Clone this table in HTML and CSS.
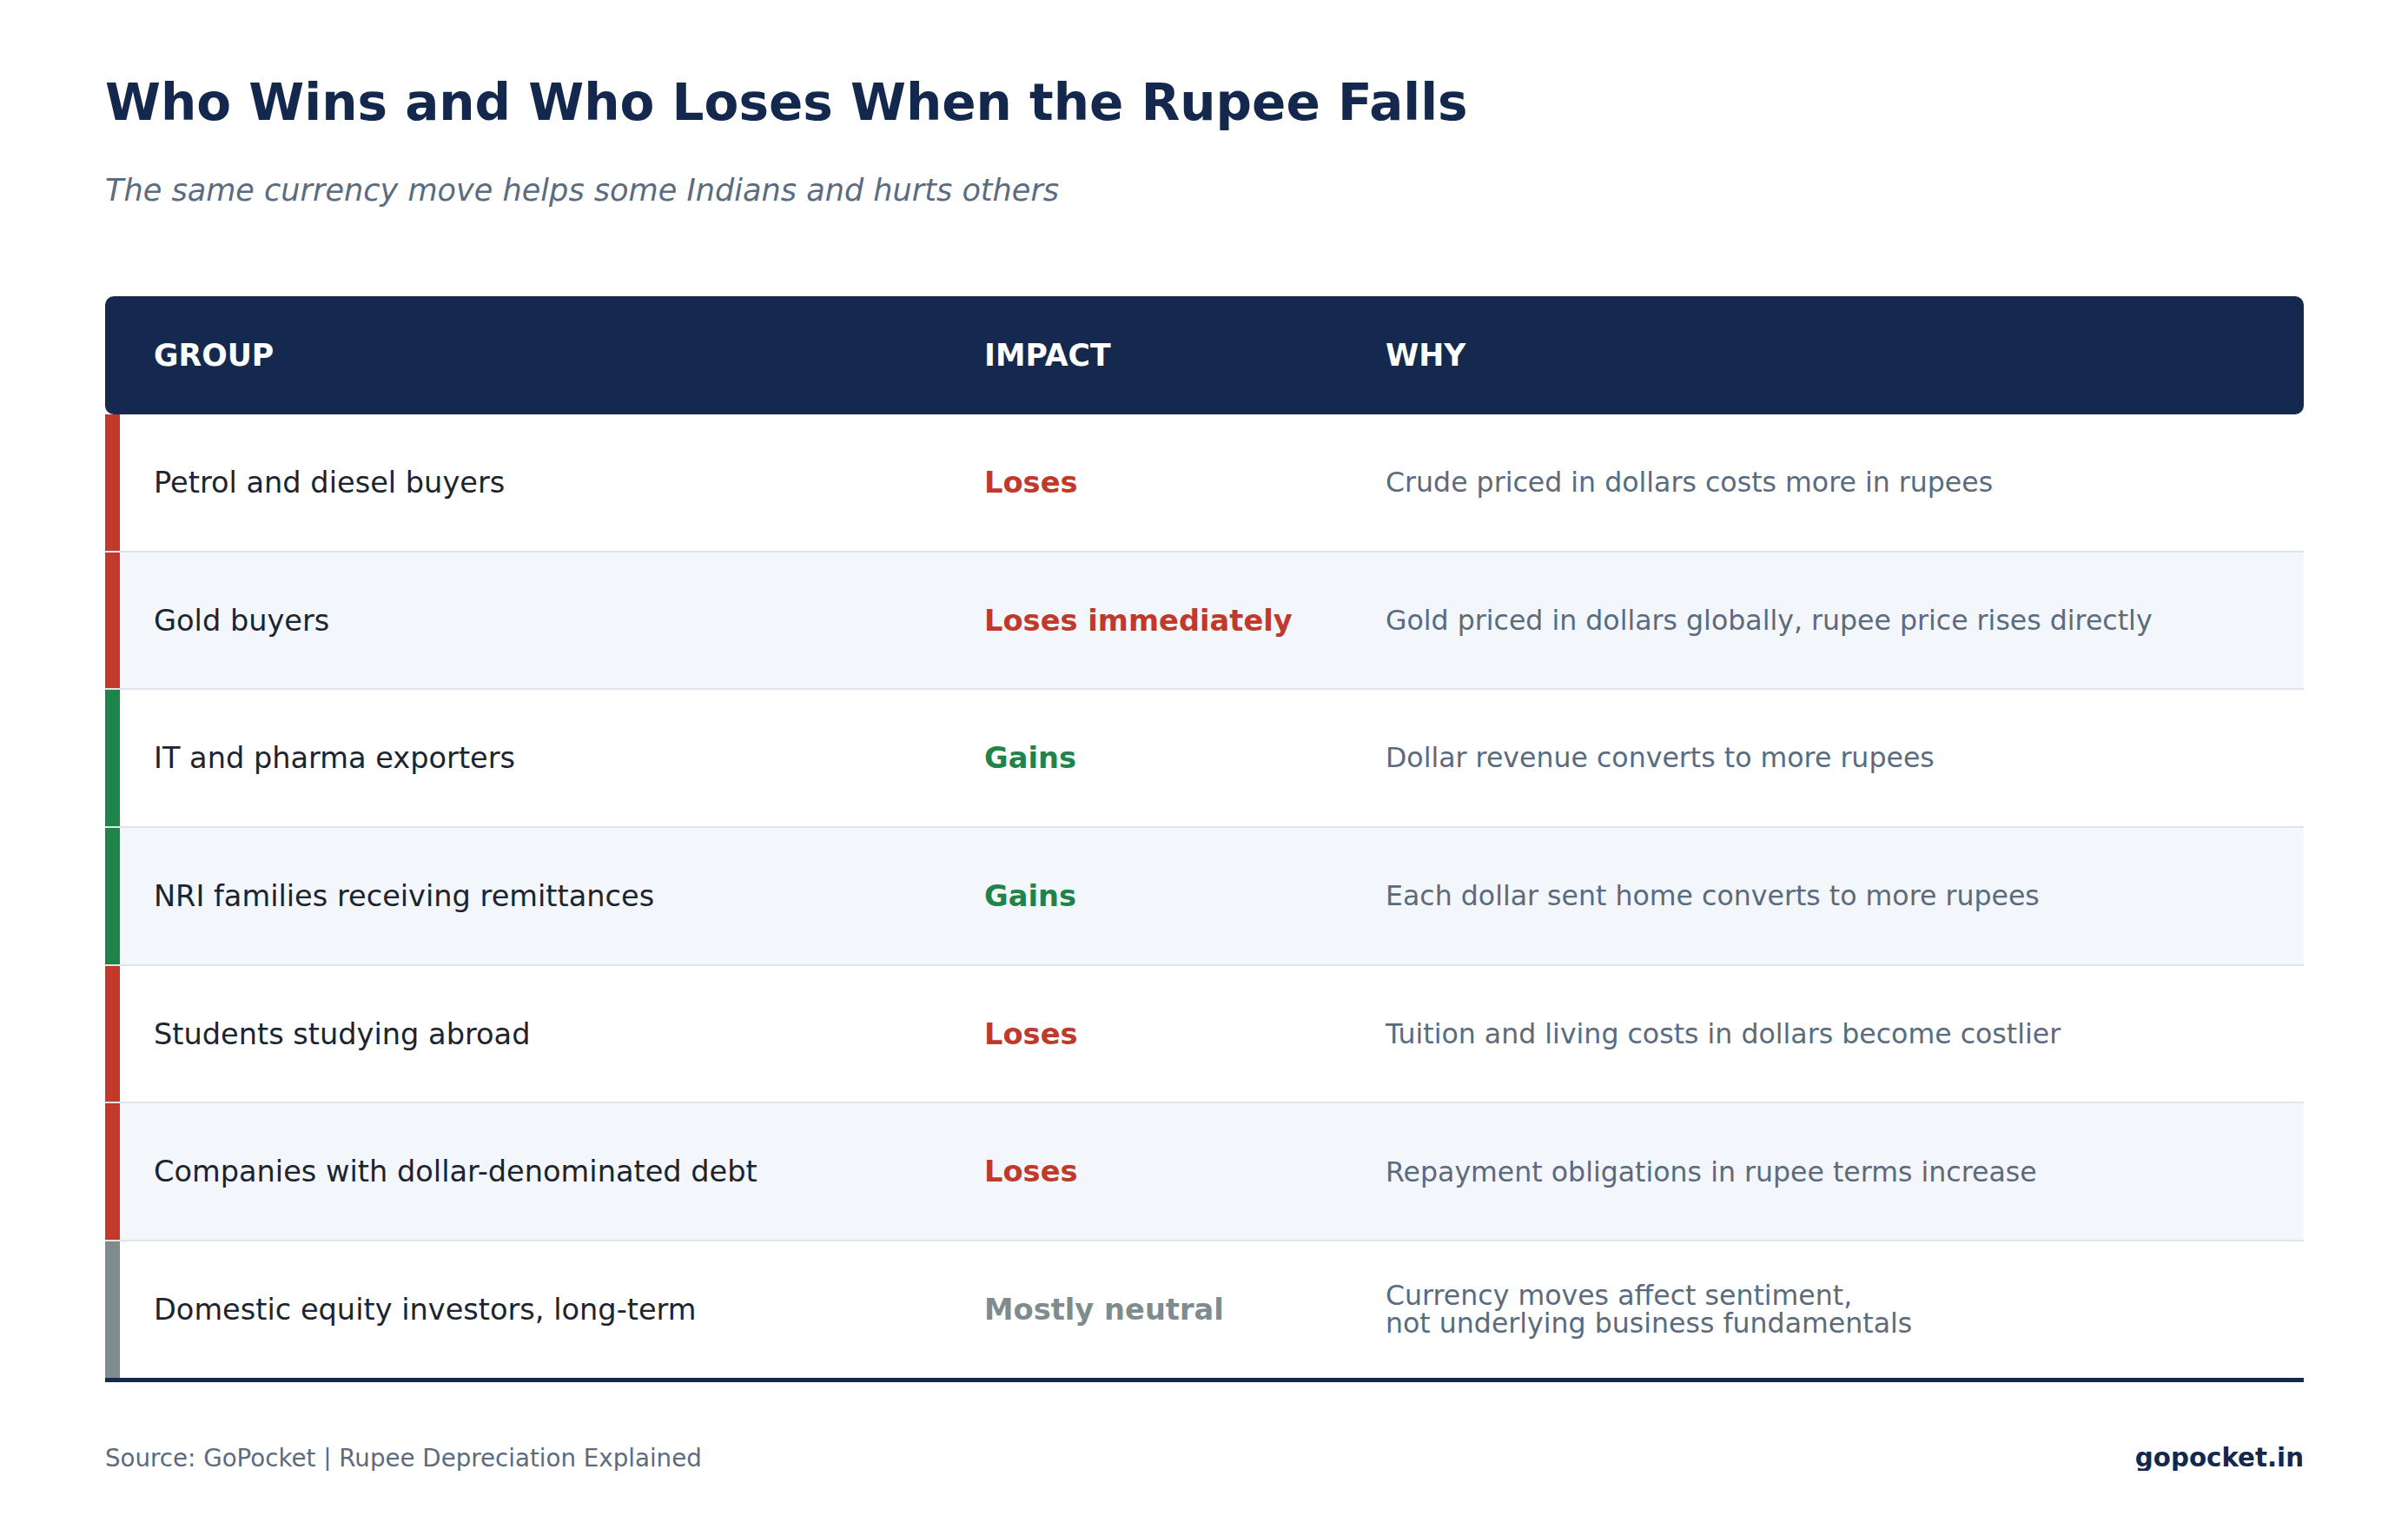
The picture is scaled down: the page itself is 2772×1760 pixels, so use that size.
FILE: index.html
```html
<!DOCTYPE html>
<html lang="en">
<head>
<meta charset="utf-8">
<title>Who Wins and Who Loses When the Rupee Falls</title>
<link rel="stylesheet" href="styles.css">
</head>
<body>
<div class="page">
  <h1 class="title">Who Wins and Who Loses When the Rupee Falls</h1>
  <p class="subtitle">The same currency move helps some Indians and hurts others</p>

  <div class="table">
    <div class="thead">
      <div class="cell">GROUP</div>
      <div class="cell">IMPACT</div>
      <div class="cell">WHY</div>
    </div>

    <div class="row bar-loss">
      <div class="cell group">Petrol and diesel buyers</div>
      <div class="cell impact loss">Loses</div>
      <div class="cell why">Crude priced in dollars costs more in rupees</div>
    </div>
    <div class="row alt bar-loss">
      <div class="cell group">Gold buyers</div>
      <div class="cell impact loss">Loses immediately</div>
      <div class="cell why">Gold priced in dollars globally, rupee price rises directly</div>
    </div>
    <div class="row bar-gain">
      <div class="cell group">IT and pharma exporters</div>
      <div class="cell impact gain">Gains</div>
      <div class="cell why">Dollar revenue converts to more rupees</div>
    </div>
    <div class="row alt bar-gain">
      <div class="cell group">NRI families receiving remittances</div>
      <div class="cell impact gain">Gains</div>
      <div class="cell why">Each dollar sent home converts to more rupees</div>
    </div>
    <div class="row bar-loss">
      <div class="cell group">Students studying abroad</div>
      <div class="cell impact loss">Loses</div>
      <div class="cell why">Tuition and living costs in dollars become costlier</div>
    </div>
    <div class="row alt bar-loss">
      <div class="cell group">Companies with dollar-denominated debt</div>
      <div class="cell impact loss">Loses</div>
      <div class="cell why">Repayment obligations in rupee terms increase</div>
    </div>
    <div class="row last bar-neutral">
      <div class="cell group">Domestic equity investors, long-term</div>
      <div class="cell impact neutral">Mostly neutral</div>
      <div class="cell why">Currency moves affect sentiment,<br>not underlying business fundamentals</div>
    </div>
  </div>

  <div class="footer">
    <span class="source">Source: GoPocket | Rupee Depreciation Explained</span>
    <span class="brand">gopocket.in</span>
  </div>
</div>
</body>
</html>
```

FILE: styles.css
```css
* {
  box-sizing: border-box;
}

html, body {
  margin: 0;
  padding: 0;
  background: #ffffff;
}

body {
  font-family: "DejaVu Sans", "Liberation Sans", sans-serif;
  color: #1c2430;
}

.page {
  width: 2772px;
  padding: 87px 120px 0 121px;
}

.title {
  margin: 0;
  font-size: 58px;
  line-height: 63px;
  font-weight: 700;
  color: #13284c;
}

.subtitle {
  margin: 51px 0 0;
  font-size: 35.1px;
  line-height: 36px;
  font-style: italic;
  color: #5b6b80;
}

.table {
  margin-top: 104px;
}

.thead {
  display: grid;
  grid-template-columns: 956px 462px 1fr;
  align-items: center;
  height: 136px;
  background: #14294d;
  border-radius: 10px;
  color: #ffffff;
  font-weight: 700;
  font-size: 34.7px;
}

.cell {
  padding-left: 56px;
}

.row {
  display: grid;
  grid-template-columns: 956px 462px 1fr;
  align-items: center;
  height: 158.7px;
  border-bottom: 2px solid #dfe5ee;
  background: #ffffff;
}

.row.alt {
  background: #f3f6fb;
}

.row.last {
  height: 161.7px;
  border-bottom: 5px solid #14294d;
}

.bar-loss {
  box-shadow: inset 17px 0 0 #c0392b;
}

.bar-gain {
  box-shadow: inset 17px 0 0 #1e8449;
}

.bar-neutral {
  box-shadow: inset 17px 0 0 #7f8c8d;
}

.group {
  font-size: 33.6px;
  color: #1c2430;
}

.impact {
  font-size: 33.7px;
  font-weight: 700;
}

.impact.loss {
  color: #c0392b;
}

.impact.gain {
  color: #1e8449;
}

.impact.neutral {
  color: #7f8c8d;
}

.why {
  font-size: 31.6px;
  line-height: 32.5px;
  color: #5b6b7e;
}

.footer {
  display: flex;
  justify-content: space-between;
  align-items: baseline;
  margin-top: 73px;
  font-size: 27.7px;
  line-height: 28px;
}

.source {
  color: #5b6b80;
}

.brand {
  font-size: 29.3px;
  font-weight: 700;
  color: #13284c;
}
```
